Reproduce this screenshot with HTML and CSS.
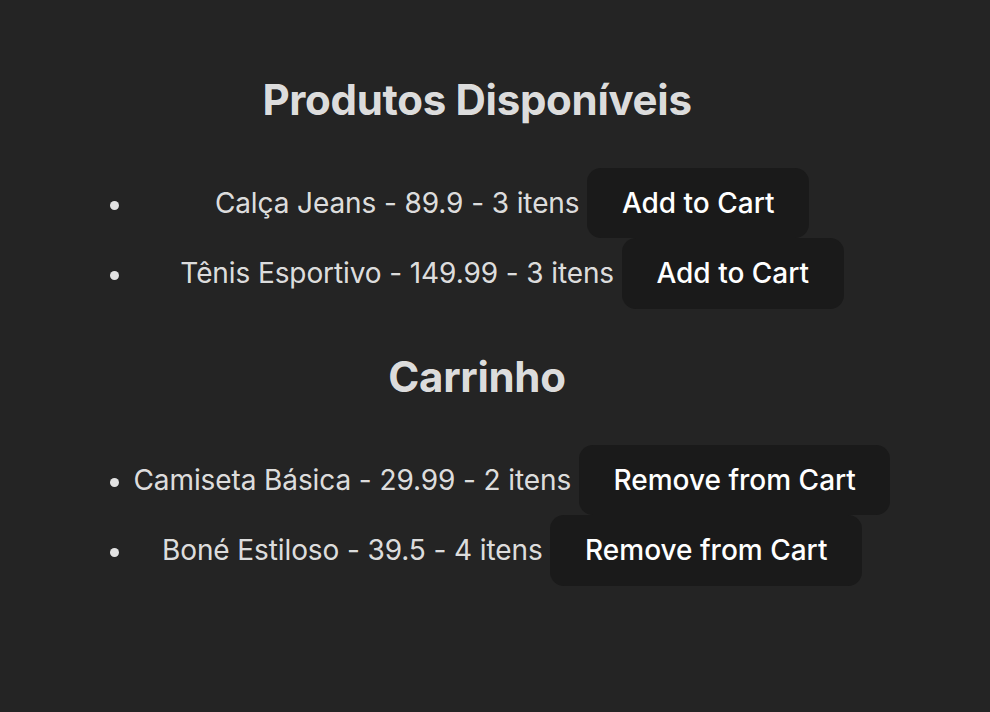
FILE: index.html
```html
<!DOCTYPE html>
<html lang="pt-BR">
<head>
<meta charset="utf-8">
<title>Loja</title>
<link rel="stylesheet" href="styles.css">
</head>
<body>
<div class="root">
  <h2 class="title">Produtos Disponíveis</h2>
  <ul class="list">
    <li class="item">Calça Jeans - 89.9 - 3 itens <button class="btn">Add to Cart</button></li>
    <li class="item">Tênis Esportivo - 149.99 - 3 itens <button class="btn">Add to Cart</button></li>
  </ul>
  <h2 class="title">Carrinho</h2>
  <ul class="list">
    <li class="item">Camiseta Básica - 29.99 - 2 itens <button class="btn">Remove from Cart</button></li>
    <li class="item">Boné Estiloso - 39.5 - 4 itens <button class="btn">Remove from Cart</button></li>
  </ul>
</div>
</body>
</html>
```
FILE: styles.css
```css
html, body {
  margin: 0;
  padding: 0;
}
body {
  background-color: #242424;
  color: rgba(255, 255, 255, 0.87);
  font-family: Inter, "Noto Sans", sans-serif;
  font-size: 28px;
  line-height: 1.5;
  font-weight: 400;
  min-height: 100vh;
  -webkit-font-smoothing: antialiased;
}
.root {
  width: 842px;
  padding: 32px 56px;
  text-align: center;
}
.title {
  font-size: 42px;
  font-weight: 700;
  line-height: 1.5;
  letter-spacing: -0.3px;
  margin: 36.4px 0;
}
.list {
  margin: 28px 0;
  padding-left: 70px;
  list-style: none;
}
.item {
  position: relative;
  line-height: 42px;
  letter-spacing: -0.1px;
}
.item::before {
  content: "";
  position: absolute;
  left: -16px;
  top: 33px;
  width: 9px;
  height: 9px;
  border-radius: 50%;
  background-color: rgba(255, 255, 255, 0.87);
}
.btn {
  font-family: inherit;
  font-size: 1em;
  font-weight: 500;
  line-height: 35px;
  letter-spacing: 0;
  color: #ffffff;
  background-color: #1a1a1a;
  border: 1px solid transparent;
  border-radius: 14px;
  padding: 0.6em 1.2em;
  cursor: pointer;
}
```
